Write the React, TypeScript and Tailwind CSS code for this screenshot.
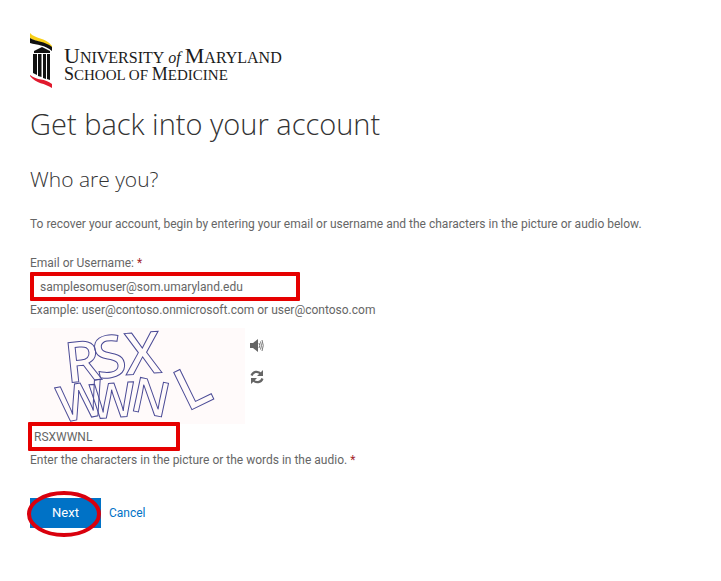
import { useState } from "react";

const BODY_FONT = "font-['Roboto','Open_Sans',sans-serif]";
const HEADING_FONT = "font-['Open_Sans','Noto_Sans',sans-serif]";

function Logo() {
  return (
    <div className="flex h-[56px] items-start">
      <svg
        width="23"
        height="56"
        viewBox="0 0 23 56"
        aria-hidden="true"
        className="mt-[1px] shrink-0"
      >
        <path d="M0 0C5 6 15 4 22 13V15C14 9 6 9 0 5Z" fill="#f8cf16" />
        <path d="M0 5C6 9 15 8 22 14V18C15 12 7 12 0 10Z" fill="#111" />
        <path d="M4 18L12 14L20 18V20H4Z" fill="#111" />
        <path
          d="M3 21H7V42L3 40ZM8 21H11.500V44L8 43ZM13 21H16V46L13 45ZM17 21H20V47L17 46Z"
          fill="#111"
        />
        <path d="M0 42C7 48 15 45 22 51V55C15 50 6 51 0 43Z" fill="#e0192d" />
      </svg>
      <div className="ml-[11px] mt-[14px] whitespace-nowrap font-['Liberation_Serif',serif] text-[#1a1a1a]">
        <div className="text-[16px] leading-5">
          <span className="text-[22px]">U</span>NIVERSITY
          <i className="mx-1">of</i>
          <span className="text-[22px]">M</span>ARYLAND
        </div>
        <div className="-mt-[2px] text-[15px] leading-[17px]">
          <span className="text-[18px]">S</span>CHOOL OF{" "}
          <span className="text-[18px]">M</span>EDICINE
        </div>
      </div>
    </div>
  );
}

const CAPTCHA = [
  { char: "R", x: 37, y: 55, angle: -6, size: 56 },
  { char: "S", x: 68, y: 52, angle: -12, size: 58 },
  { char: "X", x: 96, y: 47, angle: -4, size: 58 },
  { char: "W", x: 31, y: 95, angle: -11, size: 50 },
  { char: "W", x: 61, y: 91, angle: -4, size: 48 },
  { char: "N", x: 99, y: 82, angle: 12, size: 48 },
  { char: "L", x: 157, y: 84, angle: -26, size: 58 },
];

function CaptchaPicture() {
  return (
    <svg
      width="215"
      height="96"
      viewBox="0 0 215 96"
      role="img"
      aria-label="Verification picture"
      className="overflow-visible bg-[#fffafa]"
    >
      <g
        fill="none"
        stroke="#4b4b96"
        strokeWidth="1"
        fontWeight="600"
        fontFamily="'Open Sans', sans-serif"
      >
        {CAPTCHA.map((item, i) => (
          <text
            key={i}
            x={item.x}
            y={item.y}
            fontSize={item.size}
            transform={`rotate(${item.angle} ${item.x} ${item.y})`}
          >
            {item.char}
          </text>
        ))}
      </g>
    </svg>
  );
}

function AudioIcon() {
  return (
    <svg width="14" height="14" viewBox="0 0 14 14" aria-hidden="true">
      <path d="M0 4H3L8 0V13L3 9H0Z" fill="#666" />
      <path
        d="M9 4Q10.500 6.500 9 9M10.500 2.500Q12.500 6.500 10.500 10.500M12 1Q14.500 6.500 12 12"
        fill="none"
        stroke="#777"
        strokeWidth="1"
      />
    </svg>
  );
}

function RefreshIcon() {
  return (
    <svg width="14" height="14" viewBox="0 0 14 14" aria-hidden="true">
      <g fill="none" stroke="#666" strokeWidth="2.200">
        <path d="M1.500 5.500C3 1.500 8 .500 11 4" />
        <path d="M12.500 8.500C11 12.500 6 13.500 3 10" />
      </g>
      <path d="M13 0V6H7ZM1 14V8H7Z" fill="#666" />
    </svg>
  );
}

export default function App() {
  const [username, setUsername] = useState("samplesomuser@som.umaryland.edu");
  const [answer, setAnswer] = useState("RSXWWNL");

  return (
    <main
      className={`min-h-screen bg-white px-[30px] pt-8 pb-8 text-[12px] leading-4 text-[#666] ${BODY_FONT}`}
    >
      <Logo />

      <h1
        className={`mt-4 text-[29px] leading-10 font-light text-[#333] ${HEADING_FONT}`}
      >
        Get back into your account
      </h1>
      <h2
        className={`mt-[19px] text-[21px] leading-8 font-light text-[#333] ${HEADING_FONT}`}
      >
        Who are you?
      </h2>

      <p className="mt-[21px]">
        To recover your account, begin by entering your email or username and
        the characters in the picture or audio below.
      </p>

      <form className="mt-[23px]" onSubmit={(e) => e.preventDefault()}>
        <label htmlFor="username" className="block">
          Email or Username: <span className="text-[#a4262c]">*</span>
        </label>
        <input
          id="username"
          value={username}
          onChange={(e) => setUsername(e.target.value)}
          className="mt-[1px] block h-[29px] w-full max-w-[270px] rounded-[1px] border-4 border-[#e60000] px-[6px] outline-none"
        />
        <p className="mt-[1px]">
          Example: user@contoso.onmicrosoft.com or user@contoso.com
        </p>

        <div className="mt-[10px] flex gap-[5px]">
          <CaptchaPicture />
          <div className="flex flex-col gap-[17px] pt-[11px]">
            <button type="button" aria-label="Play audio">
              <AudioIcon />
            </button>
            <button type="button" aria-label="New picture">
              <RefreshIcon />
            </button>
          </div>
        </div>

        <input
          id="answer"
          aria-describedby="answer-hint"
          aria-label="Characters"
          value={answer}
          onChange={(e) => setAnswer(e.target.value)}
          className="relative -mt-[2px] -ml-[2px] block h-[29px] w-full max-w-[152px] rounded-[1px] border-4 border-[#e60000] bg-white px-[2px] outline-none"
        />
        <p id="answer-hint" className="mt-[1px]">
          Enter the characters in the picture or the words in the audio.{" "}
          <span className="text-[#a4262c]">*</span>
        </p>

        <div className="mt-[30px] flex items-center gap-2">
          <div className="relative">
            <button
              type="submit"
              className="h-[30px] w-[71px] bg-[#0072c6] text-[13px] text-white"
            >
              Next
            </button>
            <svg
              width="76"
              height="48"
              viewBox="0 0 76 48"
              aria-hidden="true"
              className="pointer-events-none absolute -top-2 -left-1 max-w-none"
            >
              <ellipse
                cx="38"
                cy="24"
                rx="35"
                ry="21"
                fill="none"
                stroke="#d9000d"
                strokeWidth="4"
              />
            </svg>
          </div>
          <a href="#cancel" className="text-[#0072c6]">
            Cancel
          </a>
        </div>
      </form>
    </main>
  );
}
